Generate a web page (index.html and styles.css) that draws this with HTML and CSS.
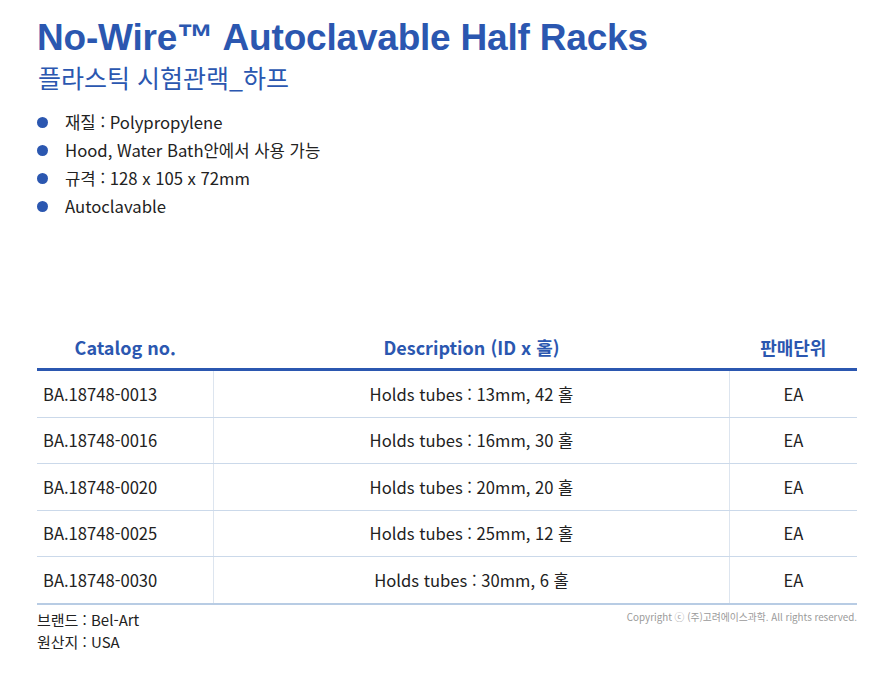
FILE: index.html
```html
<!DOCTYPE html>
<html lang="ko">
<head>
<meta charset="utf-8">
<link rel="stylesheet" href="styles.css">
</head>
<body>
<div class="page">
  <h1 class="title">No-Wire™ Autoclavable Half Racks</h1>
  <h2 class="subtitle">플라스틱 시험관랙_하프</h2>
  <ul class="features">
    <li>재질 : Polypropylene</li>
    <li>Hood, Water Bath안에서 사용 가능</li>
    <li>규격 : 128 x 105 x 72mm</li>
    <li>Autoclavable</li>
  </ul>
  <table class="spec">
    <thead>
      <tr><th class="c1">Catalog no.</th><th class="c2">Description (ID x 홀)</th><th class="c3">판매단위</th></tr>
    </thead>
    <tbody>
      <tr><td class="c1">BA.18748-0013</td><td class="c2">Holds tubes : 13mm, 42 홀</td><td class="c3">EA</td></tr>
      <tr><td class="c1">BA.18748-0016</td><td class="c2">Holds tubes : 16mm, 30 홀</td><td class="c3">EA</td></tr>
      <tr><td class="c1">BA.18748-0020</td><td class="c2">Holds tubes : 20mm, 20 홀</td><td class="c3">EA</td></tr>
      <tr><td class="c1">BA.18748-0025</td><td class="c2">Holds tubes : 25mm, 12 홀</td><td class="c3">EA</td></tr>
      <tr class="last"><td class="c1">BA.18748-0030</td><td class="c2">Holds tubes : 30mm, 6 홀</td><td class="c3">EA</td></tr>
    </tbody>
  </table>
  <div class="footer">
    <div class="origin">
      <div>브랜드 : Bel-Art</div>
      <div>원산지 : USA</div>
    </div>
    <div class="copy">Copyright ⓒ (주)고려에이스과학. All rights reserved.</div>
  </div>
</div>
</body>
</html>
```
FILE: styles.css
```css
html, body {
  margin: 0;
  padding: 0;
  background: #fff;
}
body {
  font-family: "Noto Sans CJK KR", "Noto Sans", sans-serif;
  color: #222;
}
.page {
  width: 820px;
  padding: 16px 0 0 37px;
}
.title {
  margin: 0;
  font-family: "Liberation Sans", Arial, sans-serif;
  font-weight: bold;
  font-size: 37px;
  line-height: 44px;
  color: #2b57b0;
  letter-spacing: -0.2px;
}
.subtitle {
  margin: 0 0 0 1px;
  font-weight: normal;
  font-size: 25px;
  line-height: 34px;
  color: #2b57b0;
}
.features {
  list-style: none;
  margin: 14px 0 0;
  padding: 0;
}
.features li {
  display: flex;
  align-items: center;
  font-size: 16.7px;
  line-height: 28px;
  height: 28px;
}
.features li::before {
  content: "";
  width: 11px;
  height: 11px;
  border-radius: 50%;
  background: #2b57b0;
  margin: 0 17px 0 0;
  flex: none;
}
.spec {
  margin-top: 107px;
  width: 820px;
  border-collapse: collapse;
  font-size: 16.6px;
}
.spec th {
  height: 38px;
  padding: 1px 0 2px;
  font-size: 18px;
  font-weight: bold;
  color: #2b57b0;
  border-bottom: 3px solid #2b57b0;
  vertical-align: middle;
}
.spec td {
  height: 45.5px;
  padding: 0;
  text-align: center;
  border-bottom: 1px solid #cbd9ea;
  color: #222;
}
.spec .c1 { width: 170px; }
.spec .c3 { width: 127px; }
.spec td.c1 {
  text-align: left;
  padding-left: 6px;
  border-right: 1px solid #dde5ef;
}
.spec td.c3 {
  border-left: 1px solid #dde5ef;
}
.spec tr.last td {
  border-bottom: 2px solid #b8cce4;
}
.footer {
  display: flex;
  justify-content: space-between;
  align-items: flex-start;
  margin-top: 4px;
}
.origin {
  font-size: 15px;
  line-height: 22px;
  color: #222;
}
.copy {
  font-size: 9.8px;
  color: #9a9a9a;
  margin-top: 1px;
}
```
